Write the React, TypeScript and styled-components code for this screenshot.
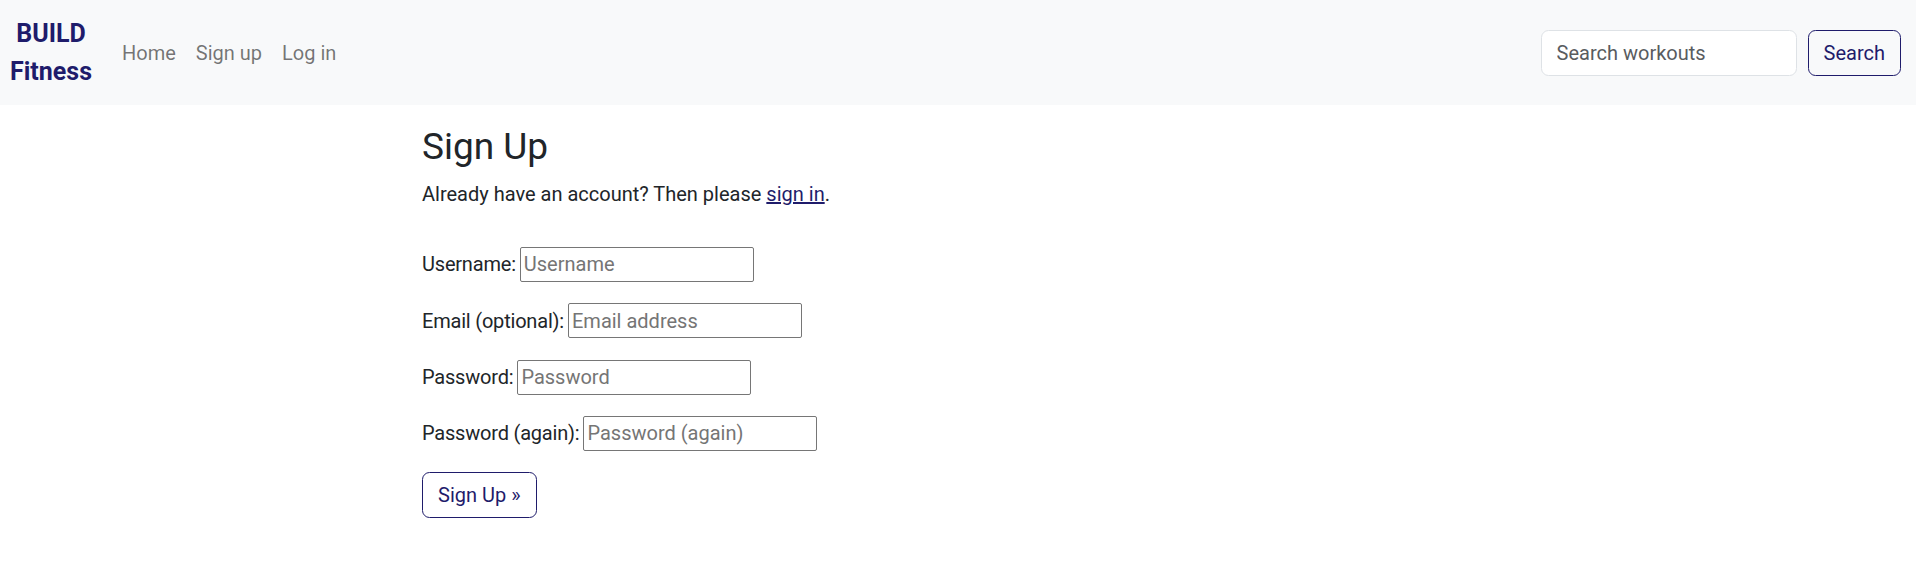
import React from "react";
import styled, { createGlobalStyle } from "styled-components";

const NAVY = "#1f1c6b";
const FONT = `Roboto, "Noto Sans", Arial, sans-serif`;

const GlobalStyle = createGlobalStyle`
  * { box-sizing: border-box; }
  html, body { margin: 0; padding: 0; background: #ffffff; }
  body {
    font-family: ${FONT};
    font-size: 20px;
    line-height: 1.5;
    color: #212529;
  }
`;

const NavBar = styled.nav`
  display: flex;
  align-items: center;
  justify-content: space-between;
  height: 105px;
  padding: 0 15px 0 10px;
  background: #f8f9fa;
`;

const NavLeft = styled.div`
  display: flex;
  align-items: center;
`;

const Brand = styled.a`
  display: block;
  text-align: center;
  font-size: 25px;
  line-height: 1.5;
  font-weight: 700;
  color: ${NAVY};
  text-decoration: none;
  margin-right: 20px;
`;

const NavList = styled.ul`
  display: flex;
  list-style: none;
  margin: 0;
  padding: 0;
`;

const NavLink = styled.a`
  display: block;
  padding: 10px 10px;
  font-size: 20px;
  line-height: 30px;
  color: rgba(0, 0, 0, 0.55);
  text-decoration: none;
`;

const SearchForm = styled.form`
  display: flex;
  align-items: center;
  gap: 11px;
`;

const SearchInput = styled.input`
  width: 256px;
  height: 46px;
  padding: 7.5px 15px;
  font-family: ${FONT};
  font-size: 20px;
  color: #212529;
  background: #fff;
  border: 1px solid #dee2e6;
  border-radius: 7.5px;
  outline: none;
  &::placeholder { color: #595c5f; }
`;

const OutlineButton = styled.button`
  height: 46px;
  padding: 0 15px;
  font-family: ${FONT};
  font-size: 20px;
  line-height: 30px;
  color: ${NAVY};
  background: transparent;
  border: 1px solid ${NAVY};
  border-radius: 7.5px;
  cursor: pointer;
`;

const Container = styled.main`
  max-width: 1650px;
  margin: 20px auto 0;
`;

const Column = styled.div`
  width: 66.6667%;
  margin-left: 16.6667%;
  padding: 0 14px;
`;

const Title = styled.h1`
  margin: 0 0 10px;
  font-size: 37px;
  line-height: 1.2;
  font-weight: 400;
  color: #212529;
`;

const Lead = styled.p`
  margin: 0 0 37.6px;
`;

const Link = styled.a`
  color: ${NAVY};
  text-decoration: underline;
`;

const Form = styled.form`
  display: flex;
  flex-direction: column;
  align-items: flex-start;
  gap: 21.3px;
`;

const Row = styled.div`
  display: flex;
  align-items: center;
  gap: 4px;
  height: 35px;
`;

const Label = styled.label`
  white-space: nowrap;
  letter-spacing: -0.2px;
`;

const Field = styled.input`
  width: 234px;
  height: 35px;
  padding: 1px 3px;
  font-family: ${FONT};
  font-size: 20px;
  color: #212529;
  border: 1px solid #767676;
  border-radius: 2px;
  background: #fff;
  &::placeholder { color: #757575; }
`;

const SubmitButton = styled(OutlineButton)`
  background: #fff;
`;

const fields = [
  { id: "username", label: "Username:", placeholder: "Username", type: "text" },
  { id: "email", label: "Email (optional):", placeholder: "Email address", type: "email" },
  { id: "password1", label: "Password:", placeholder: "Password", type: "password" },
  { id: "password2", label: "Password (again):", placeholder: "Password (again)", type: "password" },
];

export default function App() {
  return (
    <>
      <GlobalStyle />
      <NavBar>
        <NavLeft>
          <Brand href="#">
            BUILD
            <br />
            Fitness
          </Brand>
          <NavList>
            <li><NavLink href="#">Home</NavLink></li>
            <li><NavLink href="#">Sign up</NavLink></li>
            <li><NavLink href="#">Log in</NavLink></li>
          </NavList>
        </NavLeft>
        <SearchForm onSubmit={(e) => e.preventDefault()}>
          <SearchInput type="search" placeholder="Search workouts" aria-label="Search" />
          <OutlineButton type="submit">Search</OutlineButton>
        </SearchForm>
      </NavBar>
      <Container>
        <Column>
          <Title>Sign Up</Title>
          <Lead>
            Already have an account? Then please <Link href="#">sign in</Link>.
          </Lead>
          <Form onSubmit={(e) => e.preventDefault()}>
            {fields.map((f) => (
              <Row key={f.id}>
                <Label htmlFor={f.id}>{f.label}</Label>
                <Field id={f.id} type={f.type} placeholder={f.placeholder} />
              </Row>
            ))}
            <SubmitButton type="submit">Sign Up »</SubmitButton>
          </Form>
        </Column>
      </Container>
    </>
  );
}
